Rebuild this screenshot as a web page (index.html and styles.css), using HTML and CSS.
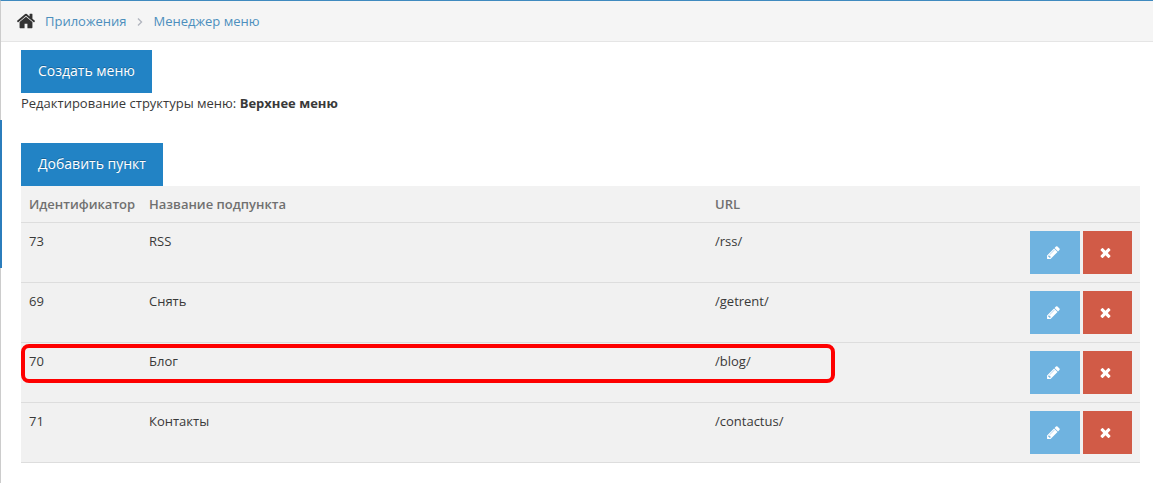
FILE: index.html
```html
<!DOCTYPE html>
<html lang="ru">
<head>
<meta charset="utf-8">
<title>Менеджер меню</title>
<link rel="stylesheet" href="styles.css">
</head>
<body>
<svg class="sprite" aria-hidden="true">
  <symbol id="pencil" viewBox="0 0 1792 1792"><path d="M491 1536l91-91-235-235-91 91v107h128v128h107zm523-928q0-22-22-22-10 0-17 7l-542 542q-7 7-7 17 0 22 22 22 10 0 17-7l542-542q7-7 7-17zm-54-192l416 416-832 832h-416v-416zm683 96q0 53-37 90l-166 166-416-416 166-165q36-38 90-38 53 0 91 38l235 234q37 39 37 91z"/></symbol>
  <symbol id="remove" viewBox="0 0 1792 1792"><path d="M1490 1322q0 40-28 68l-136 136q-28 28-68 28t-68-28l-294-294-294 294q-28 28-68 28t-68-28l-136-136q-28-28-28-68t28-68l294-294-294-294q-28-28-28-68t28-68l136-136q28-28 68-28t68 28l294 294 294-294q28-28 68-28t68 28l136 136q28 28 28 68t-28 68l-294 294 294 294q28 28 28 68z"/></symbol>
</svg>
<div class="page">
  <span class="side-mark"></span>
  <nav class="breadcrumbs">
    <svg class="home" viewBox="0 0 1792 1792" aria-hidden="true"><path d="M1472 992v480q0 26-19 45t-45 19h-384v-384h-256v384h-384q-26 0-45-19t-19-45v-480q0-1 .5-3t.5-3l575-474 575 474q1 2 1 6zm223-69l-62 74q-8 9-21 11h-3q-13 0-21-7l-692-577-692 577q-12 8-24 7-13-2-21-11l-62-74q-8-10-7-23.500t11-21.500l719-599q32-26 76-26t76 26l244 204v-195q0-14 9-23t23-9h192q14 0 23 9t9 23v408l219 182q10 8 11 21.500t-7 23.500z"/></svg>
    <a href="#">Приложения</a>
    <svg class="chevron" viewBox="0 0 6 10" aria-hidden="true"><path d="M1 1.500l3.500 3.500-3.500 3.500"/></svg>
    <a href="#">Менеджер меню</a>
  </nav>
  <main class="content">
    <button class="btn" type="button">Создать меню</button>
    <p class="caption">Редактирование структуры меню: <b>Верхнее меню</b></p>
    <button class="btn" type="button">Добавить пункт</button>
    <table class="items">
      <thead>
        <tr><th class="col-id">Идентификатор</th><th class="col-name">Название подпункта</th><th class="col-url">URL</th><th class="col-actions"></th></tr>
      </thead>
      <tbody>
        <tr><td>73</td><td>RSS</td><td>/rss/</td><td><div class="actions"><button class="icon-btn edit" type="button" aria-label="Изменить"><svg><use href="#pencil"/></svg></button><button class="icon-btn delete" type="button" aria-label="Удалить"><svg><use href="#remove"/></svg></button></div></td></tr>
        <tr><td>69</td><td>Снять</td><td>/getrent/</td><td><div class="actions"><button class="icon-btn edit" type="button" aria-label="Изменить"><svg><use href="#pencil"/></svg></button><button class="icon-btn delete" type="button" aria-label="Удалить"><svg><use href="#remove"/></svg></button></div></td></tr>
        <tr class="marked"><td>70</td><td>Блог</td><td>/blog/</td><td><div class="actions"><button class="icon-btn edit" type="button" aria-label="Изменить"><svg><use href="#pencil"/></svg></button><button class="icon-btn delete" type="button" aria-label="Удалить"><svg><use href="#remove"/></svg></button></div></td></tr>
        <tr><td>71</td><td>Контакты</td><td>/contactus/</td><td><div class="actions"><button class="icon-btn edit" type="button" aria-label="Изменить"><svg><use href="#pencil"/></svg></button><button class="icon-btn delete" type="button" aria-label="Удалить"><svg><use href="#remove"/></svg></button></div></td></tr>
      </tbody>
    </table>
  </main>
</div>
</body>
</html>
```

FILE: styles.css
```css
*, *::after { box-sizing: border-box; }

body {
  margin: 0;
  background: #fff;
  color: #393939;
  font: 13px/20px "Open Sans", "Noto Sans", sans-serif;
}

.sprite { position: absolute; width: 0; height: 0; }

.page {
  position: relative;
  min-height: 100vh;
  border-top: 1px solid #3f8abf;
  border-left: 1px solid #ccc;
}

/* Active sidebar item indicator over the left border */
.side-mark {
  position: absolute;
  top: 119px;
  left: -1px;
  width: 2px;
  height: 148px;
  background: #2b7dbc;
}

.breadcrumbs {
  display: flex;
  align-items: center;
  padding: 10px 15px;
  background: #f5f5f5;
  border-bottom: 1px solid #e5e5e5;
}

.breadcrumbs a { color: #4c8fbd; text-decoration: none; }

.home { width: 20px; height: 20px; margin-right: 9px; fill: #333; }

.chevron {
  width: 6px;
  height: 10px;
  margin: 2px 11px 0 10px;
  fill: none;
  stroke: #b2b6bf;
  stroke-width: 1.4;
}

.content { padding: 8px 13px 20px 20px; }

.btn {
  display: block;
  padding: 11px 17px 12px;
  border: 0;
  background: #2283c5;
  color: #fff;
  font: 14px/20px "Open Sans", "Noto Sans", sans-serif;
  text-shadow: 0 -1px 0 rgba(0, 0, 0, 0.25);
}

.caption { margin: 0 0 30px; }

.items {
  width: 100%;
  table-layout: fixed;
  border-spacing: 0;
  background: #f1f1f1;
  border-bottom: 1px solid #ddd;
}

.items th, .items td { padding: 8px; text-align: left; vertical-align: top; }
.items th { height: 36px; background: #f2f2f2; color: #707070; font-weight: 600; }
.items td { border-top: 1px solid #ddd; }

.col-id { width: 120px; }
.col-url { width: 315px; }
.col-actions { width: 118px; }

.actions { display: flex; justify-content: flex-end; gap: 3px; }

.icon-btn {
  display: flex;
  align-items: center;
  justify-content: center;
  width: 50px;
  height: 43px;
  padding: 0 4px 0 0;
  border: 0;
}

.icon-btn svg { width: 15px; height: 15px; fill: #fff; }
.edit { background: #6fb3e0; }
.delete { width: 49px; background: #d15b47; }

/* Highlight frame drawn over the marked row */
.marked td:first-child { position: relative; }
.marked td:first-child::after {
  content: "";
  position: absolute;
  top: 1px;
  left: 0;
  width: 814px;
  height: 39px;
  border: 4px solid #fe0000;
  border-radius: 8px;
  pointer-events: none;
}
```
